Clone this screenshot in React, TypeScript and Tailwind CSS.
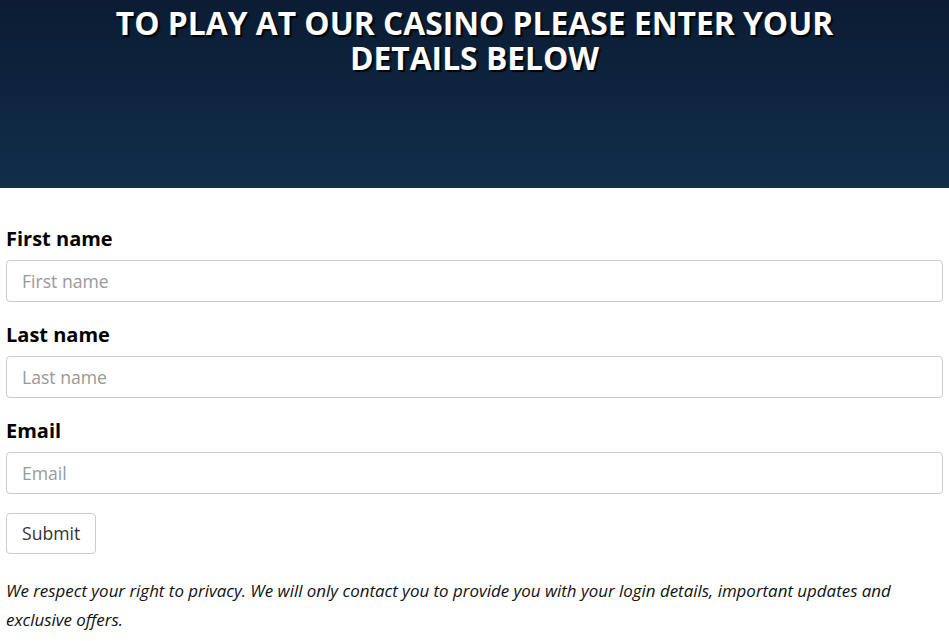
export default function App() {
  const fields = [
    { id: "first", label: "First name" },
    { id: "last", label: "Last name" },
    { id: "email", label: "Email" },
  ];

  return (
    <div className="min-h-screen bg-white font-['Open_Sans',sans-serif] text-black">
      <header className="h-[188px] bg-gradient-to-b from-[#0b1c33] to-[#112e4b] pt-[5px]">
        <h1 className="mx-auto max-w-[760px] text-center text-[31.8px] font-bold leading-[35px] text-white [text-shadow:2px_2px_1px_rgba(0,0,0,0.9)]">
          TO PLAY AT OUR CASINO PLEASE ENTER YOUR DETAILS BELOW
        </h1>
      </header>

      <form className="px-[6px] pt-[37px]" onSubmit={(e) => e.preventDefault()}>
        {fields.map((f) => (
          <div key={f.id} className="mb-[19px]">
            <label htmlFor={f.id} className="mb-[8px] block text-[20px] font-bold leading-[27px]">
              {f.label}
            </label>
            <input
              id={f.id}
              placeholder={f.label}
              className="block h-[42px] w-full rounded-[4px] border border-[#cccccc] px-[15px] text-[17.6px] text-[#333] outline-none placeholder:text-[#999999]"
            />
          </div>
        ))}

        <button
          type="submit"
          className="h-[41px] rounded-[4px] border border-[#cccccc] bg-white px-[15px] text-[17.6px] text-[#333]"
        >
          Submit
        </button>

        <p className="mt-[23px] text-[16.9px] italic leading-[28.5px] text-[#111]">
          We respect your right to privacy. We will only contact you to provide you with your login details, important updates and exclusive offers.
        </p>
      </form>
    </div>
  );
}
